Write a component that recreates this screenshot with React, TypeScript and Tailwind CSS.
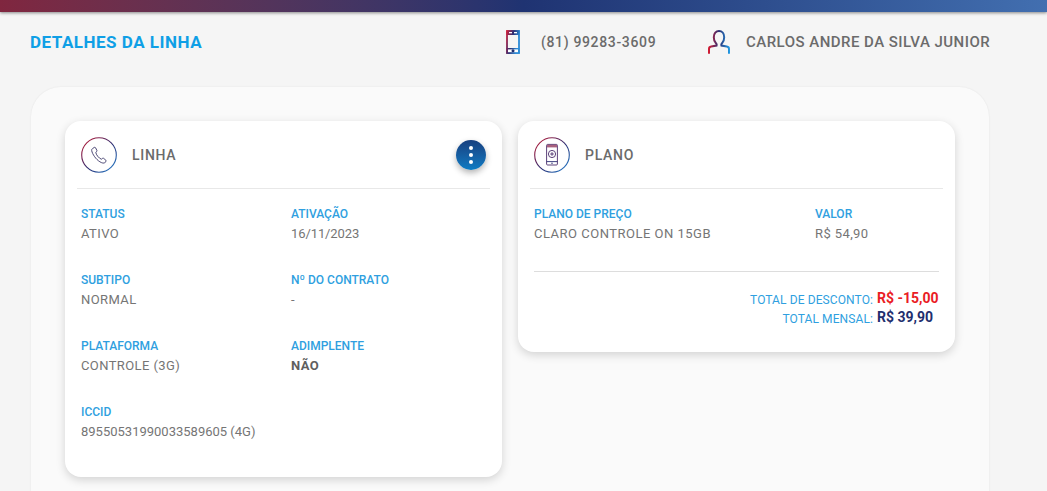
import React from 'react';

const font = { fontFamily: 'Roboto, "Liberation Sans", sans-serif' };

const GradientDef: React.FC<{ id: string }> = ({ id }) => (
  <defs>
    <linearGradient id={id} x1="0" y1="0" x2="1" y2="1">
      <stop offset="0" stopColor="#c8182f" />
      <stop offset="0.55" stopColor="#2b2f74" />
      <stop offset="1" stopColor="#2a8ad6" />
    </linearGradient>
  </defs>
);

const PhoneIcon = () => (
  <svg width="14" height="24" viewBox="0 0 14 24" fill="none">
    <defs>
      <linearGradient id="g-phone" x1="0" y1="0" x2="14" y2="3" gradientUnits="userSpaceOnUse">
        <stop offset="0" stopColor="#e01e35" />
        <stop offset="0.55" stopColor="#2b2f74" />
        <stop offset="1" stopColor="#2a8ad6" />
      </linearGradient>
    </defs>
    <rect x="1" y="1" width="12" height="22" stroke="url(#g-phone)" strokeWidth="1.8" />
    <rect x="0.5" y="0.5" width="13" height="4.5" fill="url(#g-phone)" />
    <rect x="3" y="2" width="3" height="1.3" fill="#fff" />
    <rect x="8" y="2" width="3" height="1.3" fill="#fff" />
    <rect x="0.5" y="18" width="13" height="5.5" fill="url(#g-phone)" />
    <rect x="2" y="19.4" width="10" height="2.8" fill="#fff" />
    <circle cx="7" cy="20.8" r="1.5" fill="#1f2f6f" />
  </svg>
);

const UserIcon = () => (
  <svg width="22" height="24" viewBox="0 0 22 24" fill="none">
    <defs>
      <linearGradient id="g-user" x1="0" y1="0" x2="22" y2="0" gradientUnits="userSpaceOnUse">
        <stop offset="0" stopColor="#dc1a2e" />
        <stop offset="0.5" stopColor="#2b2f74" />
        <stop offset="1" stopColor="#21a0ea" />
      </linearGradient>
    </defs>
    <path
      d="M1 23V19C1 17.6 2 16.8 3.2 16.6L8.6 15.6C9 14.6 8.6 13.8 7.8 13C6.6 11.8 5.8 9.8 5.8 7.2C5.8 3.4 8 1 11 1C14 1 16.2 3.4 16.2 7.2C16.2 9.8 15.4 11.8 14.2 13C13.4 13.8 13 14.6 13.4 15.6L18.8 16.6C20 16.8 21 17.6 21 19V23"
      stroke="url(#g-user)"
      strokeWidth="2"
      strokeLinecap="round"
    />
  </svg>
);

const CallGlyph = () => (
  <svg width="36" height="36" viewBox="0 0 36 36" fill="none">
    <GradientDef id="g-call" />
    <circle cx="18" cy="18" r="17.3" stroke="url(#g-call)" strokeWidth="1.1" />
    <path
      d="M11.5 11.6L13.3 10.4C13.8 10.1 14.3 10.3 14.5 10.7L15.9 13.4C16.1 13.8 16 14.2 15.7 14.5L14.8 15.3C14.9 17.6 18 21.4 20.4 22.2L21.6 21.3C21.9 21.1 22.4 21.1 22.7 21.4L24.9 23.3C25.3 23.6 25.3 24.1 25 24.5L23.7 25.7C22.8 26.4 21 26.1 18.9 24.8C14.9 22.3 11.4 17.3 10.7 13.6C10.5 12.6 10.9 12 11.5 11.6Z"
      stroke="#3a3566"
      strokeWidth="0.9"
      strokeLinejoin="round"
    />
  </svg>
);

const PlanGlyph = () => (
  <svg width="36" height="36" viewBox="0 0 36 36" fill="none">
    <GradientDef id="g-plan" />
    <circle cx="18" cy="18" r="17.3" stroke="url(#g-plan)" strokeWidth="1.1" />
    <rect x="12.6" y="7.4" width="10.8" height="20.6" rx="1" stroke="#4a2c6a" strokeWidth="0.9" />
    <rect x="13" y="7.8" width="10" height="2.6" fill="#a8607e" />
    <path d="M12.6 24.6H23.4" stroke="#2b2f74" strokeWidth="0.9" />
    <circle cx="18" cy="26.3" r="0.7" fill="#2b2f74" />
    <circle cx="18" cy="17" r="3.6" stroke="#4a2c6a" strokeWidth="0.9" />
    <path d="M18 15.2V18.8M16.2 17H19.8" stroke="#4a2c6a" strokeWidth="0.9" />
  </svg>
);

const Field: React.FC<{ label: string; value: string; strong?: boolean; valueClass?: string }> = ({
  label,
  value,
  strong,
  valueClass = 'tracking-[0.4px]',
}) => (
  <div>
    <div className="text-[12px] leading-[14px] font-medium text-[#2f9fe0]">{label}</div>
    <div className={`mt-[5px] text-[13px] leading-[15px] ${valueClass} ${strong ? 'font-bold text-[#5f5f5f]' : 'text-[#757575]'}`}>
      {value}
    </div>
  </div>
);

const Card: React.FC<{ icon: React.ReactNode; title: string; action?: React.ReactNode; children: React.ReactNode }> = ({ icon, title, action, children }) => (
  <div className="w-[437px] rounded-[16px] bg-white shadow-[0_3px_10px_rgba(0,0,0,0.16)]">
    <div className="mx-3 flex h-[68px] items-center border-b border-[#e8e8e8] pl-1 pr-1">
      {icon}
      <span className="ml-[15px] mt-[2px] text-[14px] font-medium tracking-[0.7px] text-[#6b6b6b]">{title}</span>
      <div className="ml-auto">{action}</div>
    </div>
    {children}
  </div>
);

export default function App() {
  return (
    <div style={font} className="h-[491px] overflow-hidden bg-[#f5f5f5]">
      <div className="h-3 bg-gradient-to-r from-[#80263f] via-[#1f3372] to-[#426fb0] shadow-[0_1px_3px_rgba(0,0,0,0.45)]" />

      <header className="flex h-[75px] items-start pl-[30px] pt-[21px]">
        <h1 className="w-[476px] text-[17px] leading-[18px] font-bold tracking-[0.5px] text-[#0f9fe6]">DETALHES DA LINHA</h1>
        <div className="-mt-[3px] flex w-[202px] items-center">
          <PhoneIcon />
          <span className="ml-[21px] text-[14px] leading-[18px] font-medium tracking-[0.65px] text-[#6b6b6b]">(81) 99283-3609</span>
        </div>
        <div className="-mt-[3px] flex items-center">
          <UserIcon />
          <span className="ml-[16px] text-[15px] leading-[18px] font-medium tracking-[0.47px] text-[#6b6b6b]">CARLOS ANDRE DA SILVA JUNIOR</span>
        </div>
      </header>

      <main className="ml-[31px] flex h-[500px] w-[958px] items-start gap-4 rounded-[30px] bg-[#fafafa] pl-[34px] pt-[34px] shadow-[0_0_2px_rgba(0,0,0,0.08)]">
        <Card
          icon={<CallGlyph />}
          title="LINHA"
          action={
            <button className="flex h-[30px] w-[30px] flex-col items-center justify-center gap-[3px] rounded-full bg-gradient-to-t from-[#0c7cc4] to-[#17407f] shadow-[0_3px_6px_rgba(0,0,0,0.3)]">
              <span className="h-1 w-1 rounded-full bg-white" />
              <span className="h-1 w-1 rounded-full bg-white" />
              <span className="h-1 w-1 rounded-full bg-white" />
            </button>
          }
        >
          <div className="grid h-[288px] grid-cols-[210px_1fr] auto-rows-[66px] pl-4 pt-[18px]">
            <Field label="STATUS" value="ATIVO" />
            <Field label="ATIVAÇÃO" value="16/11/2023" valueClass="tracking-[-0.1px]" />
            <Field label="SUBTIPO" value="NORMAL" />
            <Field label="Nº DO CONTRATO" value="-" />
            <Field label="PLATAFORMA" value="CONTROLE (3G)" />
            <Field label="ADIMPLENTE" value="NÃO" strong />
            <Field label="ICCID" value="89550531990033589605 (4G)" valueClass="tracking-normal" />
          </div>
        </Card>

        <Card icon={<PlanGlyph />} title="PLANO">
          <div className="px-4 pt-[18px]">
            <div className="grid grid-cols-[281px_1fr] border-b border-[#dddddd] pb-[30px]">
              <Field label="PLANO DE PREÇO" value="CLARO CONTROLE ON 15GB" valueClass="tracking-[0.5px]" />
              <Field label="VALOR" value="R$ 54,90" />
            </div>
            <div className="grid grid-cols-[1fr_62px] items-start gap-x-1 gap-y-[1px] pb-[25px] pt-[18px] text-right">
              <span className="pt-[2px] text-[12px] leading-[16px] tracking-[0.1px] text-[#2f9fe0]">TOTAL DE DESCONTO:</span>
              <span className="text-left text-[14px] leading-[16px] font-bold whitespace-nowrap text-[#ea1c24]">R$ -15,00</span>
              <span className="pt-[2px] text-[12px] leading-[16px] tracking-[0.1px] text-[#2f9fe0]">TOTAL MENSAL:</span>
              <span className="text-left text-[14px] leading-[16px] font-bold whitespace-nowrap text-[#1f2f6f]">R$ 39,90</span>
            </div>
          </div>
        </Card>
      </main>
    </div>
  );
}
